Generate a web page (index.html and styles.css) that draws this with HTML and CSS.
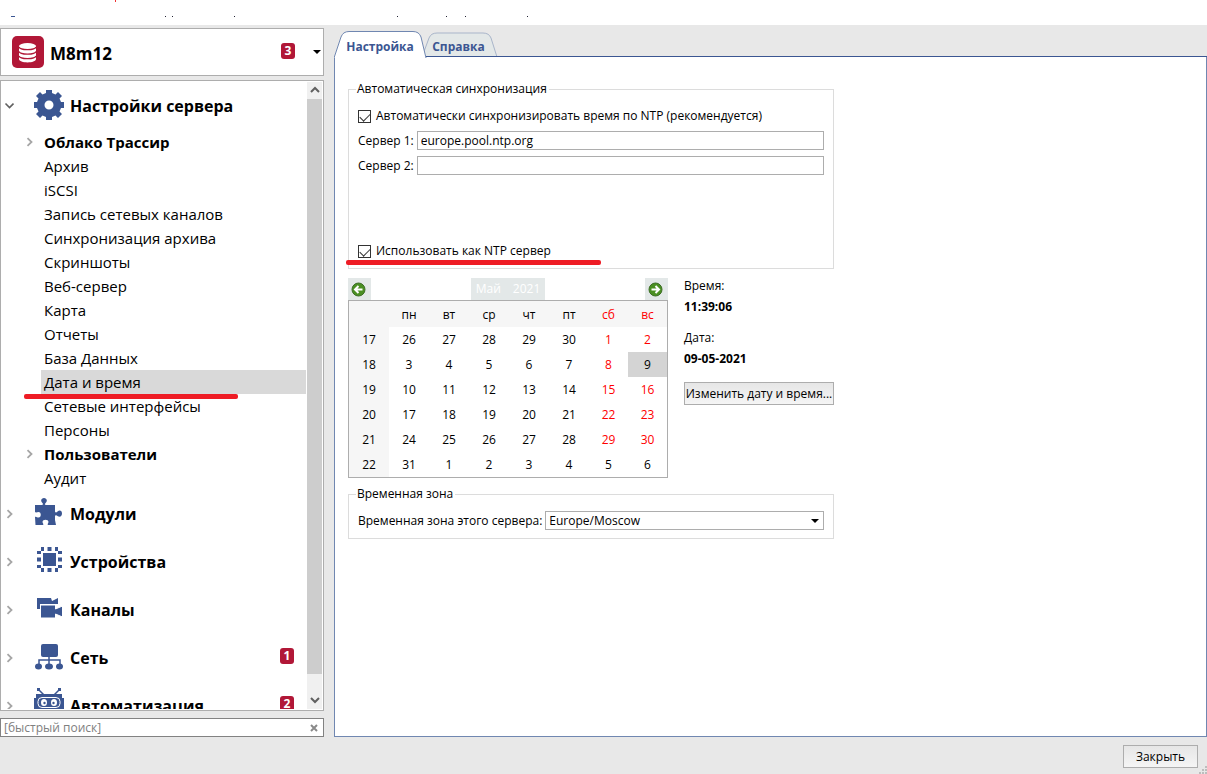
FILE: index.html
```html
<!DOCTYPE html>
<html lang="ru">
<head>
<meta charset="utf-8">
<title>Настройки сервера</title>
<link rel="stylesheet" href="styles.css">
</head>
<body>
<svg class="defs" width="0" height="0" aria-hidden="true">
  <symbol id="right" viewBox="0 0 10 10"><path d="M3.500 1.200l4 3.800-4 3.800" fill="none" stroke="#a6a6a6" stroke-width="1.800"/></symbol>
  <symbol id="down" viewBox="0 0 10 10"><path d="M1.500 2.500l4 4 4-4" fill="none" stroke="#606060" stroke-width="1.600"/></symbol>
</svg>
<div class="titlebar">
  <svg class="specks" width="560" height="18" aria-hidden="true">
    <path d="M115 1h1" stroke="#f03030" stroke-width="2"/>
    <path d="M11 16.500h4" stroke="#3b5692"/>
    <path d="M165 16.500h1m6 0h1m61 0h1m162 0h1m48 0h1m18 0h1m61 0h1" stroke="#223"/>
  </svg>
</div>
<main class="window">
  <aside class="sidebar">
    <button class="server" type="button">
      <svg width="32" height="32" viewBox="0 0 32 32" aria-hidden="true">
        <rect width="32" height="32" rx="5" fill="#b11737"/>
        <path d="M7 10v13c0 4.500 17 4.500 17 0V10" fill="#fff"/>
        <ellipse cx="15.500" cy="10" rx="8.500" ry="3" fill="#fff"/>
        <path d="M7 11c1 3.500 16 3.500 17 0M7 15.500c1 3.500 16 3.500 17 0M7 20c1 3.500 16 3.500 17 0" fill="none" stroke="#b11737" stroke-width="1.300"/>
      </svg>
      <span class="server-name">M8m12</span>
      <span class="badge">3</span>
      <svg width="8" height="4" aria-hidden="true"><path d="M0 0h8L4 4z"/></svg>
    </button>
    <nav class="tree">
      <div class="tree-body">
        <div class="section">
          <svg class="arrow" width="10" height="10"><use href="#down"/></svg>
          <svg class="icon" width="30" height="30" viewBox="0 0 30 30" fill="#3b5692">
            <path fill-rule="evenodd" d="M12 0h6v3l3.500 1.500L24 2l4 4-2.500 2.500L27 12h3v6h-3l-1.500 3.500L28 24l-4 4-2.500-2.500L18 27v3h-6v-3l-3.500-1.500L6 28l-4-4 2.500-2.500L3 18H0v-6h3l1.500-3.500L2 6l4-4 2.500 2.500L12 3zM15 10.500a4.500 4.500 0 1 0 0 9 4.500 4.500 0 0 0 0-9z"/>
          </svg>
          <span>Настройки сервера</span>
        </div>
        <ul class="items">
          <li class="group"><svg class="arrow" width="10" height="10"><use href="#right"/></svg><a href="#">Облако Трассир</a></li>
          <li><a href="#">Архив</a></li>
          <li><a href="#">iSCSI</a></li>
          <li><a href="#">Запись сетевых каналов</a></li>
          <li><a href="#">Синхронизация архива</a></li>
          <li><a href="#">Скриншоты</a></li>
          <li><a href="#">Веб-сервер</a></li>
          <li><a href="#">Карта</a></li>
          <li><a href="#">Отчеты</a></li>
          <li><a href="#">База Данных</a></li>
          <li class="selected"><a href="#">Дата и время</a><span class="mark"></span></li>
          <li><a href="#">Сетевые интерфейсы</a></li>
          <li><a href="#">Персоны</a></li>
          <li class="group"><svg class="arrow" width="10" height="10"><use href="#right"/></svg><a href="#">Пользователи</a></li>
          <li><a href="#">Аудит</a></li>
        </ul>
        <div class="section">
          <svg class="arrow" width="10" height="10"><use href="#right"/></svg>
          <svg class="icon" width="30" height="30" viewBox="0 0 30 30" fill="#3b5692">
            <path d="M1 7h7c2 0 1-1.500 0-2.500C6 2 8 0 10 0s4 2 2 4.500c-1 1-2 2.500 0 2.500h9v6c0 2 1.500 1.500 2.500.500C26 11.500 28 13 28 15.500S26 20 23.500 18c-1-1-2.500-1-2.500.500V22l1 5h-8c-1-1 .500-2 .500-3 0-3-6-3-6 0 0 1 1.500 2 .500 3H1.500L1 19c1-1 2 .500 3.500.500 3 0 3-5.500 0-5.500C3 14 2 15 1 14z"/>
          </svg>
          <span>Модули</span>
        </div>
        <div class="section">
          <svg class="arrow" width="10" height="10"><use href="#right"/></svg>
          <svg class="icon" width="30" height="30" viewBox="0 0 30 30" fill="#3b5692">
            <rect x="9" y="7" width="13" height="13"/>
            <path d="M7 3h3m3.500 0h4m3.500 0h3M7 24h3m3.500 0h4m3.500 0h3M5 5v3m0 3.500v4m0 3.500v3M26 5v3m0 3.500v4m0 3.500v3" stroke="#3b5692" stroke-width="4"/>
          </svg>
          <span>Устройства</span>
        </div>
        <div class="section">
          <svg class="arrow" width="10" height="10"><use href="#right"/></svg>
          <svg class="icon" width="30" height="30" viewBox="0 0 30 30" fill="#3b5692">
            <path d="M3 4h14l1 3 6-3v6H6v5H3z"/>
            <path d="M6.500 11h15v4l7-3v11l-7-3v4h-15z" stroke="#fff"/>
          </svg>
          <span>Каналы</span>
        </div>
        <div class="section">
          <svg class="arrow" width="10" height="10"><use href="#right"/></svg>
          <svg class="icon" width="30" height="30" viewBox="0 0 30 30" fill="#3b5692">
            <rect x="7" y="2" width="17" height="13" rx="2"/>
            <path d="M15 14v9M5 23v-5h21v5" fill="none" stroke="#3b5692" stroke-width="1.500"/>
            <ellipse cx="4.500" cy="24.500" rx="3.500" ry="3"/><ellipse cx="15" cy="24.500" rx="4" ry="3"/><ellipse cx="25.500" cy="24.500" rx="3.500" ry="3"/>
          </svg>
          <span>Сеть</span>
          <span class="badge">1</span>
        </div>
        <div class="section">
          <svg class="arrow" width="10" height="10"><use href="#right"/></svg>
          <svg class="icon" width="30" height="30" viewBox="0 0 30 30" fill="#3b5692">
            <path d="M5 0l5 5M25 0l-5 5" stroke="#3b5692" stroke-width="1.500"/>
            <path d="M3 -2h3v3H3zM24 -2h3v3h-3zM2 4h26v4h2v11h-2v3H2v-3H0V8h2z"/>
            <rect x="4" y="7.500" width="22" height="10" rx="4" fill="none" stroke="#fff"/>
            <ellipse cx="10" cy="12.500" rx="3" ry="3.500" fill="#fff"/><ellipse cx="20" cy="12.500" rx="3" ry="3.500" fill="#fff"/>
            <circle cx="10.500" cy="13" r="1.200"/><circle cx="19.500" cy="13" r="1.200"/>
          </svg>
          <span>Автоматизация</span>
          <span class="badge">2</span>
        </div>
      </div>
      <div class="scrollbar" aria-hidden="true">
        <svg width="15" height="17"><path d="M4 10l4-4 4 4" fill="none" stroke="#606060" stroke-width="2"/></svg>
        <div class="thumb"></div>
        <svg width="15" height="17"><path d="M4 6l4 4 4-4" fill="none" stroke="#606060" stroke-width="2"/></svg>
      </div>
    </nav>
    <div class="search">
      <input type="text" placeholder="[быстрый поиск]" aria-label="Быстрый поиск">
      <button type="button" aria-label="Очистить"><svg width="8" height="8"><path d="M1 1l6 6M7 1L1 7" stroke="#8a8a8a" stroke-width="2"/></svg></button>
    </div>
  </aside>
  <section class="content">
    <div class="tabs">
      <svg class="tab-shapes" width="170" height="27" aria-hidden="true">
        <path d="M88 26L95 7Q97 2 103 2H149Q155 2 157 7L163 26" fill="#e3e8e8" stroke="#a9b5ca"/>
        <path d="M0 27L7 6Q9 .500 15 .500H79Q85 .500 87 6L92 27" fill="#fff" stroke="#7087b1"/>
      </svg>
      <button class="tab" type="button">Настройка</button>
      <button class="tab" type="button">Справка</button>
      <span class="tab-line"></span>
    </div>
    <div class="panel">
      <fieldset class="box sync">
        <legend>Автоматическая синхронизация</legend>
        <label class="check"><input type="checkbox" checked>Автоматически синхронизировать время по NTP (рекомендуется)</label>
        <div class="field"><label for="s1">Сервер 1:</label><input id="s1" type="text" value="europe.pool.ntp.org"></div>
        <div class="field"><label for="s2">Сервер 2:</label><input id="s2" type="text"></div>
        <label class="check last"><input type="checkbox" checked>Использовать как NTP сервер<span class="mark"></span></label>
      </fieldset>
      <div class="date-row">
        <div class="calendar">
          <div class="cal-nav">
            <button type="button" aria-label="Предыдущий месяц"><svg width="15" height="15" viewBox="0 0 15 15"><circle cx="7.500" cy="7.500" r="6.500" fill="#4a8f22" stroke="#3c6e25"/><path d="M11.500 7.500H4.500M7.500 4L4 7.500 7.500 11" fill="none" stroke="#fff" stroke-width="2"/></svg></button>
            <span class="month"><span>Май</span><span>2021</span></span>
            <button type="button" aria-label="Следующий месяц"><svg width="15" height="15" viewBox="0 0 15 15"><circle cx="7.500" cy="7.500" r="6.500" fill="#4a8f22" stroke="#3c6e25"/><path d="M3.500 7.500h7M7.500 4L11 7.500 7.500 11" fill="none" stroke="#fff" stroke-width="2"/></svg></button>
          </div>
          <table>
            <colgroup><col span="6" class="workday"><col span="2" class="weekend"></colgroup>
            <thead><tr><th></th><th>пн</th><th>вт</th><th>ср</th><th>чт</th><th>пт</th><th class="red">сб</th><th class="red">вс</th></tr></thead>
            <tbody>
              <tr><th>17</th><td>26</td><td>27</td><td>28</td><td>29</td><td>30</td><td class="red">1</td><td class="red">2</td></tr>
              <tr><th>18</th><td>3</td><td>4</td><td>5</td><td>6</td><td>7</td><td class="red">8</td><td class="today">9</td></tr>
              <tr><th>19</th><td>10</td><td>11</td><td>12</td><td>13</td><td>14</td><td class="red">15</td><td class="red">16</td></tr>
              <tr><th>20</th><td>17</td><td>18</td><td>19</td><td>20</td><td>21</td><td class="red">22</td><td class="red">23</td></tr>
              <tr><th>21</th><td>24</td><td>25</td><td>26</td><td>27</td><td>28</td><td class="red">29</td><td class="red">30</td></tr>
              <tr><th>22</th><td>31</td><td>1</td><td>2</td><td>3</td><td>4</td><td>5</td><td>6</td></tr>
            </tbody>
          </table>
        </div>
        <div class="clock">
          <dl>
            <dt>Время:</dt><dd>11:39:06</dd>
            <dt>Дата:</dt><dd>09-05-2021</dd>
          </dl>
          <button class="btn" type="button">Изменить дату и время...</button>
        </div>
      </div>
      <fieldset class="box zone">
        <legend>Временная зона</legend>
        <div class="field">
          <label for="tz">Временная зона этого сервера:</label>
          <span class="select"><select id="tz"><option>Europe/Moscow</option></select><svg width="8" height="4" aria-hidden="true"><path d="M0 0h8L4 4z"/></svg></span>
        </div>
      </fieldset>
    </div>
  </section>
</main>
<footer class="footer">
  <button class="btn" type="button">Закрыть</button>
  <svg class="grip" width="8" height="8" aria-hidden="true"><path d="M6 0h2v2H6zM6 3h2v2H6zM3 3h2v2H3zM6 6h2v2H6zM3 6h2v2H3zM0 6h2v2H0z" fill="#bdbdbd"/></svg>
</footer>
</body>
</html>
```
FILE: styles.css
```css
* { box-sizing: border-box; }
body {
  margin: 0;
  height: 100vh;
  display: flex;
  flex-direction: column;
  background: #e8e8e8;
  color: #000;
  font: 12px/16px "Open Sans", "Noto Sans", sans-serif;
}
button, input, select { font: inherit; color: inherit; }
.defs { position: absolute; }
.titlebar { flex: none; height: 25px; background: #fff; }
.specks { display: block; }
.window {
  flex: 1;
  min-height: 0;
  display: grid;
  grid-template-columns: 324px minmax(0, 1fr);
  gap: 10px;
}
.sidebar {
  display: flex;
  flex-direction: column;
  min-height: 0;
  padding-top: 3px;
}
.server {
  flex: none;
  display: flex;
  align-items: center;
  height: 48px;
  padding: 0 2px 0 11px;
  border: 1px solid #adadad;
  background: #fff;
  text-align: left;
}
.server-name {
  flex: 1;
  padding: 3px 0 0 6px;
  font-size: 17px;
  font-weight: 700;
}
.badge {
  width: 14px;
  height: 16px;
  border-radius: 3px;
  background: #b11737;
  color: #fff;
  font-size: 12px;
  font-weight: 700;
  line-height: 16px;
  text-align: center;
}
.server .badge { margin: 0 18px 2px 0; }
.tree {
  flex: 1;
  min-height: 0;
  display: flex;
  margin-top: 4px;
  padding: 1px;
  border: 1px solid #adadad;
  background: #fff;
  overflow: hidden;
}
.tree-body { flex: 1; min-width: 0; margin-right: 1px; overflow: hidden; }
.section {
  display: flex;
  align-items: center;
  height: 48px;
  padding: 0 12px 0 2px;
  font-size: 16px;
  font-weight: 700;
}
.section .icon { margin: 0 6px 2px 20px; overflow: visible; }
.section .badge { margin: 0 0 4px auto; }
.arrow { flex: none; }
.items { margin: 0; padding: 0; list-style: none; font-size: 15px; }
.items li {
  position: relative;
  display: flex;
  align-items: center;
  height: 24px;
  margin-left: 39px;
  padding-left: 3px;
}
.items .group { margin-left: 22px; padding-left: 0; gap: 10px; font-weight: 700; }
.items a { color: inherit; text-decoration: none; line-height: 24px; }
.items .selected { background: #d9d9d9; }
.mark {
  position: absolute;
  height: 5px;
  border-radius: 2px;
  background: #ee1c25;
  z-index: 1;
}
.items .mark { left: -17px; top: 24px; width: 214px; }
.scrollbar {
  width: 15px;
  display: flex;
  flex-direction: column;
  background: #f0f0f0;
}
.scrollbar svg { flex: none; }
.thumb { flex: 1; margin-bottom: 18px; background: #cdcdcd; }
.search {
  flex: none;
  display: flex;
  align-items: center;
  height: 19px;
  margin-top: 7px;
  padding-right: 5px;
  border: 1px solid #828282;
  background: #fff;
}
.search input {
  flex: 1;
  min-width: 0;
  padding: 0 3px;
  border: 0;
  outline: 0;
  background: none;
}
.search input::placeholder { color: #808080; }
.search button { display: flex; padding: 0; border: 0; background: none; }
.content { display: flex; flex-direction: column; min-width: 0; padding-top: 6px; }
.tabs { position: relative; display: flex; height: 26px; }
.tab-shapes { position: absolute; left: 0; top: 0; }
.tab {
  position: relative;
  width: 92px;
  padding: 5px 0 0;
  border: 0;
  background: none;
  color: #3b5692;
  font-weight: 700;
}
.tab + .tab { width: 65px; }
.tab-line {
  flex: 1;
  margin-left: -65px;
  border-bottom: 1px solid #3b5692;
  position: relative;
  pointer-events: none;
}
.panel {
  flex: 1;
  padding: 24px 13px;
  border: 1px solid #7087b1;
  border-top: 0;
  background: #fff;
}
.box {
  width: 486px;
  max-width: 100%;
  margin: 0;
  padding: 0 9px;
  border: 1px solid #dcdcdc;
}
.box legend { padding: 0 2px 0 1px; margin-left: -2px; }
.sync { height: 188px; display: flow-root; }
.check {
  position: relative;
  display: flex;
  align-items: center;
  gap: 5px;
  margin-top: 11px;
  margin-bottom: 7px;
}
.check input {
  appearance: none;
  display: grid;
  justify-content: center;
  width: 13px;
  height: 13px;
  margin: 0;
  border: 1px solid #333;
  background: #fff;
}
.check input:checked::before {
  content: "";
  width: 9px;
  height: 5px;
  margin-top: 2px;
  border: solid #333;
  border-width: 0 0 1px 1px;
  transform: rotate(-45deg);
}
.last { margin-top: 68px; }
.check .mark { left: -12px; top: 17px; width: 255px; }
.field { display: flex; align-items: center; gap: 3px; margin-bottom: 6px; }
.field input, .field select {
  width: 100%;
  height: 19px;
  padding: 0 3px;
  border: 1px solid #adadad;
  border-radius: 0;
  background: #fff;
  outline: 0;
}
.field label { flex: none; }
.field input { flex: 1; min-width: 0; }
.select { position: relative; flex: 1; display: flex; }
.select select { appearance: none; line-height: 16px; }
.select svg { position: absolute; right: 5px; top: 8px; pointer-events: none; }
.date-row { display: flex; gap: 16px; margin-top: 9px; }
.calendar { width: 320px; }
.cal-nav { display: flex; justify-content: space-between; height: 22px; }
.cal-nav button {
  width: 23px;
  padding: 3px;
  border: 0;
  background: #e3e8e8;
}
.cal-nav svg { display: block; }
.month {
  display: flex;
  justify-content: center;
  gap: 12px;
  width: 74px;
  background: #e3e8e8;
  color: #fff;
  line-height: 22px;
}
.calendar table {
  width: 100%;
  table-layout: fixed;
  border-collapse: separate;
  border-spacing: 0;
  border: 1px solid #adadad;
  text-align: center;
}
.workday { width: 40px; }
.weekend { width: 39px; }
.calendar th, .calendar td { height: 25px; padding: 0; font-weight: 400; }
.calendar th { background: #f6f6f6; }
.calendar thead th { height: 26px; padding-top: 2px; }
.calendar .red { color: #f00; }
.calendar .today { background: #d4d4d4; }
.clock dl { margin: 0 0 15px; }
.clock dt { margin-bottom: 5px; }
.clock dd { margin: 0 0 15px; font-weight: 700; }
.btn {
  height: 23px;
  padding: 0;
  border: 1px solid #adadad;
  background: linear-gradient(#e6e6e6, #f5f5f5);
}
.clock .btn { width: 150px; }
.zone { height: 53px; margin-top: 8px; }
.zone .field { margin-top: 9px; }
.footer {
  flex: none;
  display: flex;
  justify-content: flex-end;
  align-items: flex-start;
  height: 37px;
  padding-top: 8px;
}
.footer .btn { width: 75px; margin-right: 1px; }
.grip { align-self: flex-end; }
```
